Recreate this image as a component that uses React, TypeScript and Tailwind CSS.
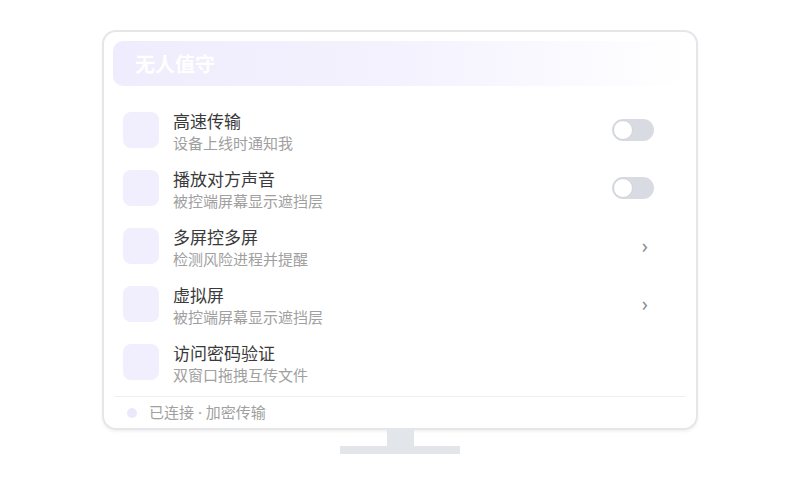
import React from "react";

type Row = { title: string; sub: string; ctrl: "toggle" | "chevron" | "none" };

const rows: Row[] = [
  { title: "高速传输", sub: "设备上线时通知我", ctrl: "toggle" },
  { title: "播放对方声音", sub: "被控端屏幕显示遮挡层", ctrl: "toggle" },
  { title: "多屏控多屏", sub: "检测风险进程并提醒", ctrl: "chevron" },
  { title: "虚拟屏", sub: "被控端屏幕显示遮挡层", ctrl: "chevron" },
  { title: "访问密码验证", sub: "双窗口拖拽互传文件", ctrl: "none" },
];

function Toggle() {
  return (
    <div className="relative w-[42px] h-[22px] rounded-full bg-[#d8dbe2] mr-[33px]">
      <div className="absolute left-[1px] top-[1px] w-[20px] h-[20px] rounded-full bg-white border border-[#cfd3da]" />
    </div>
  );
}

export default function App() {
  return (
    <div
      className="w-[800px] h-[500px] bg-white flex flex-col items-center pt-[30px]"
      style={{ fontFamily: '"Noto Sans", "Noto Sans CJK SC", sans-serif' }}
    >
      <div className="w-[596px] h-[400px] border-2 border-[#e4e6ea] rounded-[14px] px-[9px] pt-[9px] flex flex-col shadow-[0_2px_3px_rgba(0,0,0,0.05)]">
        <div className="h-[45px] shrink-0 rounded-[10px] bg-gradient-to-r from-[#efecfd] via-[#f4f2fe] to-white flex items-center pl-[22px] pt-[2px]">
          <span className="text-white font-bold text-[20px] leading-none">无人值守</span>
        </div>
        <div className="mt-[15px] flex flex-col">
          {rows.map((r) => (
            <div key={r.title} className="h-[58px] flex items-center pl-[10px]">
              <div className="w-9 h-9 rounded-[8px] bg-[#f1effd] shrink-0" />
              <div className="ml-[14px] flex-1 flex flex-col mt-[4px]">
                <div className="text-[17px] leading-[22px] text-[#3a3a3a]">{r.title}</div>
                <div className="text-[15px] leading-[20px] text-[#a0a0a0]">{r.sub}</div>
              </div>
              {r.ctrl === "toggle" && <Toggle />}
              {r.ctrl === "chevron" && (
                <span className="mr-[39px] text-[20px] leading-none text-[#8a8e96]">›</span>
              )}
            </div>
          ))}
        </div>
        <div className="mt-[5px] mx-px border-t border-[#eeeff2]" />
        <div className="flex-1 flex items-center pl-[14px]">
          <div className="w-[10px] h-[10px] rounded-full bg-[#ebe8fc]" />
          <span className="ml-[12px] text-[15px] text-[#a0a0a0]">已连接 · 加密传输</span>
        </div>
      </div>
      <div className="w-[27px] h-[16px] bg-[#e2e5ea]" />
      <div className="w-[120px] h-[8px] bg-[#e2e5ea]" />
    </div>
  );
}
